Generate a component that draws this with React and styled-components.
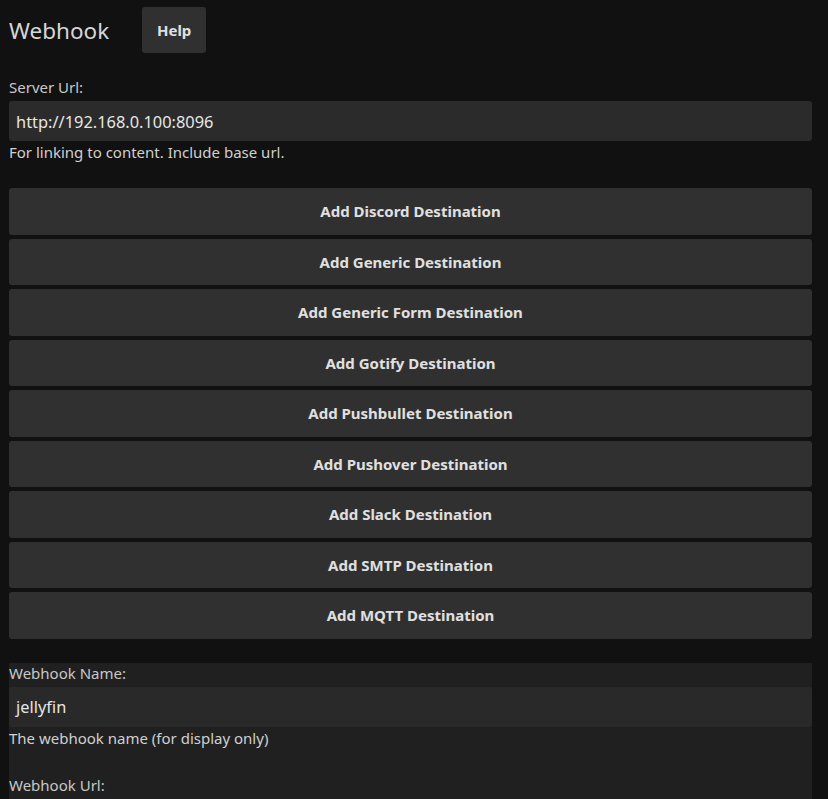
import styled, { createGlobalStyle } from "styled-components";

const GlobalStyle = createGlobalStyle`
  html, body {
    margin: 0;
    padding: 0;
    background-color: #111111;
  }
  body {
    font-family: "Noto Sans", "Open Sans", sans-serif;
    color: #dddddd;
  }
`;

const Page = styled.div`
  padding: 7px 16px 0 9px;
  height: 799px;
  overflow: hidden;
  box-sizing: border-box;
`;

const Header = styled.div`
  display: flex;
  align-items: center;
  gap: 33px;
  height: 46px;
`;

const Title = styled.h1`
  margin: 0;
  font-size: 22.5px;
  font-weight: 400;
  color: #d6d6d6;
`;

const SmallButton = styled.button`
  width: 64px;
  height: 46px;
  border: 0;
  border-radius: 3px;
  background-color: #303030;
  color: #e0e0e0;
  font-family: inherit;
  font-size: 15px;
  font-weight: 700;
`;

const Field = styled.div`
  display: flex;
  flex-direction: column;
  padding-top: ${(p) => p.$top || 0}px;
`;

const Label = styled.label`
  font-size: 15px;
  line-height: 20px;
  color: #c8c8c8;
  margin-bottom: 4px;
`;

const Input = styled.div`
  height: 40px;
  display: flex;
  align-items: center;
  padding: 0 7px;
  border-radius: 3px;
  background-color: ${(p) => p.$bg || "#2b2b2b"};
  color: #e6e6e6;
  font-size: 16.4px;
`;

const Hint = styled.div`
  font-size: 15px;
  line-height: 22px;
  color: #d0d0d0;
`;

const ButtonList = styled.div`
  display: flex;
  flex-direction: column;
  gap: 4px;
  margin-top: 25px;
`;

const WideButton = styled.button`
  height: 46.5px;
  border: 0;
  border-radius: 3px;
  background-color: #303030;
  color: #e0e0e0;
  font-family: inherit;
  font-size: 15px;
  font-weight: 700;
`;

const Panel = styled.div`
  margin-top: 24px;
  background-color: #202020;
  padding-bottom: 40px;
`;

const Gap = styled.div`
  height: 26px;
`;

const destinations = [
  "Discord",
  "Generic",
  "Generic Form",
  "Gotify",
  "Pushbullet",
  "Pushover",
  "Slack",
  "SMTP",
  "MQTT",
];

const App = () => {
  return (
    <>
      <GlobalStyle />
      <Page>
        <Header>
          <Title>Webhook</Title>
          <SmallButton>Help</SmallButton>
        </Header>
        <Field $top={24}>
          <Label>Server Url:</Label>
          <Input>http://192.168.0.100:8096</Input>
          <Hint>For linking to content. Include base url.</Hint>
        </Field>
        <ButtonList>
          {destinations.map((d) => (
            <WideButton key={d}>Add {d} Destination</WideButton>
          ))}
        </ButtonList>
        <Panel>
          <Field>
            <Label>Webhook Name:</Label>
            <Input $bg="#292929">jellyfin</Input>
            <Hint>The webhook name (for display only)</Hint>
          </Field>
          <Gap />
          <Field>
            <Label>Webhook Url:</Label>
            <Input $bg="#292929"></Input>
          </Field>
        </Panel>
      </Page>
    </>
  );
};

export default App;
